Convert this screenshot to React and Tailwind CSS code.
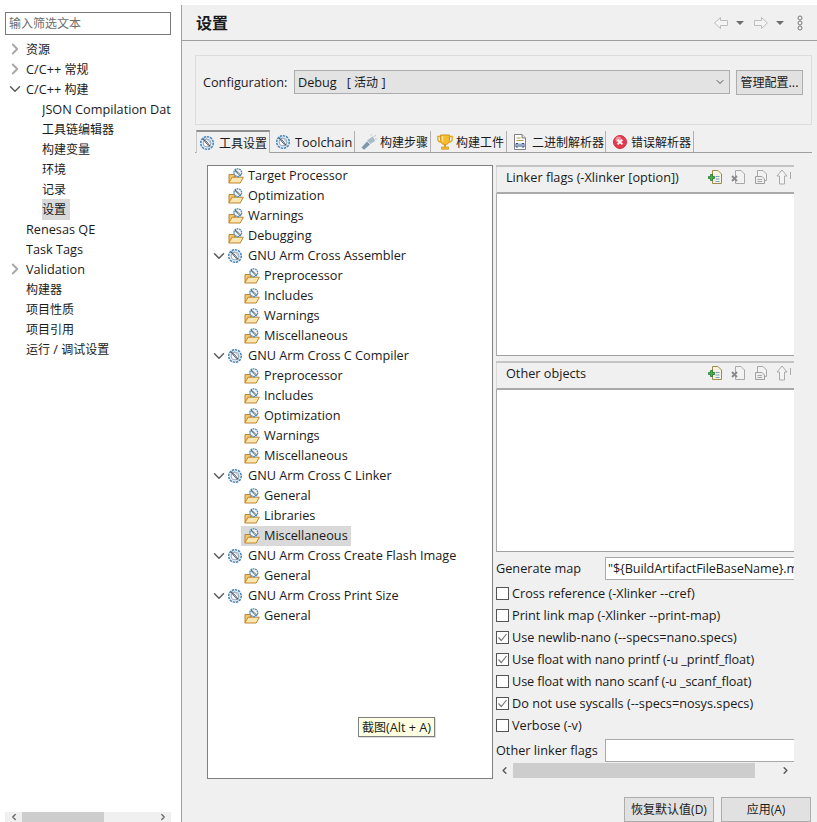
import { ChevronRight, ChevronDown, ChevronLeft } from 'lucide-react'

const FONT = 'font-["Open_Sans","Noto_Sans_CJK_SC",sans-serif]'

const navItems = [
  { label: '资源', arrow: 'right' },
  { label: 'C/C++ 常规', arrow: 'right' },
  { label: 'C/C++ 构建', arrow: 'down' },
  { label: 'JSON Compilation Dat', sub: true },
  { label: '工具链编辑器', sub: true },
  { label: '构建变量', sub: true },
  { label: '环境', sub: true },
  { label: '记录', sub: true },
  { label: '设置', sub: true, selected: true },
  { label: 'Renesas QE' },
  { label: 'Task Tags' },
  { label: 'Validation', arrow: 'right' },
  { label: '构建器' },
  { label: '项目性质' },
  { label: '项目引用' },
  { label: '运行 / 调试设置' },
]

const toolTree = [
  { label: 'Target Processor', depth: 0 },
  { label: 'Optimization', depth: 0 },
  { label: 'Warnings', depth: 0 },
  { label: 'Debugging', depth: 0 },
  { label: 'GNU Arm Cross Assembler', tool: true },
  { label: 'Preprocessor', depth: 1 },
  { label: 'Includes', depth: 1 },
  { label: 'Warnings', depth: 1 },
  { label: 'Miscellaneous', depth: 1 },
  { label: 'GNU Arm Cross C Compiler', tool: true },
  { label: 'Preprocessor', depth: 1 },
  { label: 'Includes', depth: 1 },
  { label: 'Optimization', depth: 1 },
  { label: 'Warnings', depth: 1 },
  { label: 'Miscellaneous', depth: 1 },
  { label: 'GNU Arm Cross C Linker', tool: true },
  { label: 'General', depth: 1 },
  { label: 'Libraries', depth: 1 },
  { label: 'Miscellaneous', depth: 1, selected: true },
  { label: 'GNU Arm Cross Create Flash Image', tool: true },
  { label: 'General', depth: 1 },
  { label: 'GNU Arm Cross Print Size', tool: true },
  { label: 'General', depth: 1 },
]

const linkerChecks = [
  { label: 'Cross reference (-Xlinker --cref)' },
  { label: 'Print link map (-Xlinker --print-map)' },
  { label: 'Use newlib-nano (--specs=nano.specs)', checked: true },
  { label: 'Use float with nano printf (-u _printf_float)', checked: true, tight: true },
  { label: 'Use float with nano scanf (-u _scanf_float)', tight: true },
  { label: 'Do not use syscalls (--specs=nosys.specs)', checked: true },
  { label: 'Verbose (-v)' },
]

// chinese runs sit at 12px in the screenshot, latin a bit bigger
function Txt({ children }) {
  return children.split(/([\u4e00-\u9fff]+)/).map((part, i) =>
    i % 2 ? <span key={i} className="text-[12px]">{part}</span> : part
  )
}

function GearIcon() {
  return (
    <svg width="16" height="16" viewBox="0 0 16 16" className="shrink-0 -ml-px mr-px">
      <circle cx="8" cy="8" r="6.3" fill="#e6eef5" stroke="#4a86b8" strokeWidth="1.5" strokeDasharray="2.4 0.8" />
      <circle cx="8" cy="8" r="3.9" fill="#fff" stroke="#7d93a8" strokeWidth="0.8" />
      <path d="M4.2 3.8 L11.2 11.6" stroke="#46525e" strokeWidth="2" strokeDasharray="1.2 0.5" />
      <path d="M7 3.2 L12.4 9" stroke="#9db4c8" strokeWidth="1" />
    </svg>
  )
}

function FolderIcon() {
  return (
    <svg width="16" height="16" viewBox="0 0 16 16" className="shrink-0">
      <path d="M1 14.5 V6.5 H6.5 V14.5 Z" fill="#f3c76c" stroke="#bb8430" />
      <path d="M0.7 15 L4.2 9.2 H15.4 L12.2 15 Z" fill="#fde6ad" stroke="#bb8430" />
      <circle cx="9.8" cy="4.7" r="3.9" fill="#eef3f8" stroke="#4a86b8" strokeWidth="1.3" strokeDasharray="1.8 0.6" />
      <path d="M7.2 2.4 L12.2 7.2" stroke="#46525e" strokeWidth="1.7" strokeDasharray="1 0.5" />
    </svg>
  )
}

function TabIcon({ kind }) {
  if (kind === 'gear') return <GearIcon />
  if (kind === 'hammer') {
    return (
      <svg width="16" height="16" viewBox="0 0 16 16" className="shrink-0">
        <path d="M0.5 13.5 L6 7.5 L9 10.5 L3 15.8 Z" fill="#7d98ab" />
        <path d="M6 6.5 L11.5 2.5 L13 4.5 L14 7 L9.5 10 Z" fill="#a7bccb" />
        <path d="M9.5 1.5 L11 0.5 M12.5 2.5 L15 1.5 M14 5 L16 5" stroke="#bccbd6" />
      </svg>
    )
  }
  if (kind === 'trophy') {
    return (
      <svg width="16" height="16" viewBox="0 0 16 16" className="shrink-0">
        <path d="M3.5 1 H12.5 V6.5 C12.5 9.5 10 10.5 8 10.5 C6 10.5 3.5 9.5 3.5 6.5 Z" fill="#f7bd2e" stroke="#d1951a" />
        <path d="M5.5 2 V7.5" stroke="#fde28c" strokeWidth="1.4" />
        <path d="M3.5 2.5 H0.8 V5 C0.8 7 2.5 8 4.2 8 M12.5 2.5 H15.2 V5 C15.2 7 13.5 8 11.8 8" fill="none" stroke="#e2a61f" strokeWidth="1.3" />
        <path d="M7 10.5 H9 V12.8 H7 Z" fill="#d1951a" />
        <path d="M4.5 13 H11.5 V15.2 H4.5 Z" fill="#f7bd2e" stroke="#d1951a" strokeWidth="0.8" />
      </svg>
    )
  }
  if (kind === 'binary') {
    return (
      <svg width="16" height="16" viewBox="0 0 16 16" className="shrink-0">
        <path d="M1.5 0.5 H9 L12.5 4 V15.5 H1.5 Z" fill="#fff" stroke="#7b7f86" />
        <path d="M9 0.5 V4 H12.5" fill="#e7e3c8" stroke="#7b7f86" />
        <path d="M3.5 4 H7.5 M3.5 6.5 H10.5" stroke="#b69a54" />
        <path d="M3 9.5 H5 V13 H3 Z M7 9.5 V13 M9 9.5 H11 V13 H9 Z" fill="none" stroke="#2f4f85" />
      </svg>
    )
  }
  return (
    <svg width="16" height="16" viewBox="0 0 16 16" className="shrink-0">
      <circle cx="8" cy="8" r="6.5" fill="#e23b4e" stroke="#cf3043" />
      <circle cx="6.5" cy="5.5" r="3" fill="#f08c98" />
      <path d="M5.6 5.6 L10.4 10.4 M10.4 5.6 L5.6 10.4" stroke="#fff" strokeWidth="1.8" />
    </svg>
  )
}

function PaneTools() {
  return (
    <div className="flex items-center gap-[7px] mr-[-6px]">
      <svg width="16" height="16" viewBox="0 0 16 16" className="shrink-0">
        <path d="M5.5 1.5 H11 L14.5 5 V14.5 H5.5 Z" fill="#f6f3e4" stroke="#9f8a4b" />
        <path d="M8.5 7.5 H12.5 M8.5 10 H12.5 M8.5 12.5 H12.5" stroke="#7ba0c7" />
        <path d="M3.5 5.5 H5.5 V7.5 H7.5 V9.5 H5.5 V11.5 H3.5 V9.5 H1.5 V7.5 H3.5 Z" fill="#4caf50" stroke="#1f7a2e" strokeWidth="0.8" />
      </svg>
      <svg width="16" height="16" viewBox="0 0 16 16" className="shrink-0">
        <path d="M5.5 1.5 H11 L14.5 5 V14.5 H5.5 Z" fill="#f2f2f2" stroke="#a8a8a8" />
        <path d="M2 7 L7 12 M7 7 L2 12" stroke="#8a8a8a" strokeWidth="1.9" />
      </svg>
      <svg width="16" height="16" viewBox="0 0 16 16" className="shrink-0">
        <path d="M4.5 1.5 H10 L13.5 5 V11.5 H4.5 Z" fill="#f2f2f2" stroke="#a8a8a8" />
        <path d="M2.5 7.5 H9 L11.5 10 V14.5 H2.5 Z" fill="#ededed" stroke="#a0a0a0" />
        <path d="M4.5 10.5 H9 M4.5 12.5 H9" stroke="#a8a8a8" />
      </svg>
      <svg width="16" height="16" viewBox="0 0 16 16" className="shrink-0">
        <path d="M6 1 L11 7 H8.5 V15 H3.5 V7 H1 Z" fill="#f4f4f4" stroke="#ababab" />
        <path d="M14.5 3 V10" stroke="#ababab" />
      </svg>
    </div>
  )
}

function ListPane({ title, className }) {
  return (
    <div className={`flex flex-col border-t-2 border-[#c4c4c4] ${className}`}>
      <div className="h-[27px] flex items-center justify-between pl-[9px] pr-[8px] pb-[5px] border-b-2 border-[#a9a9a9] border-l border-l-[#d8d8d8]">
        <span>{title}</span>
        <PaneTools />
      </div>
      <div className="flex-1 bg-white border-l border-l-[#a9a9a9] border-b border-b-[#a0a0a0]" />
    </div>
  )
}

function Arrow({ dir }) {
  if (dir === 'right') return <ChevronRight size={18} strokeWidth={2.4} className="text-[#a6a6a6] shrink-0" />
  if (dir === 'down') return <ChevronDown size={18} strokeWidth={2} className="text-[#5c5c5c] shrink-0" />
  return null
}

function Tab({ icon, label, active, className }) {
  return (
    <div className={`flex items-center gap-[3px] border-r border-[#b0b0b0] whitespace-nowrap ${className} ${active ? 'h-[23px] -mb-px pl-[3px] border-t-2 border-t-[#8f8f8f] border-l border-l-[#c8c8c8] bg-[#f0f0f0]' : 'h-[21px] pl-[6px]'}`}>
      <TabIcon kind={icon} />
      <span className="pt-px"><Txt>{label}</Txt></span>
    </div>
  )
}

export default function App() {
  return (
    <div className={`relative w-[817px] h-[822px] flex bg-white overflow-hidden text-[12.7px] leading-[20px] text-[#1a1a1a] ${FONT}`}>
      <aside className="w-[181px] shrink-0 flex flex-col pt-[12px]">
        <div className="mx-[5px] w-[166px] h-[23px] border border-[#7a7a7a] px-[3px] flex items-center text-[12px] text-[#6d6d6d] box-border">
          输入筛选文本
        </div>
        <div className="mt-[4px] flex-1 overflow-hidden">
          {navItems.map((it, i) => (
            <div key={i} className="h-[20px] flex items-center whitespace-nowrap">
              <span className="w-[26px] pl-[6px] shrink-0 flex">
                <Arrow dir={it.arrow} />
              </span>
              <span className={it.sub ? 'ml-[16px] w-[129px] overflow-hidden' : ''}>
                <span className={it.selected ? 'bg-[#d9d9d9] px-[4px] -ml-[4px] inline-block' : ''}><Txt>{it.label}</Txt></span>
              </span>
            </div>
          ))}
        </div>
        <div className="mx-[5px] w-[166px] h-[10px] bg-[#f0f0f0] flex items-center overflow-hidden">
          <span className="w-[17px] flex justify-center text-[#666]"><ChevronLeft size={10} strokeWidth={3} /></span>
          <div className="w-[82px] h-full bg-[#cdcdcd]" />
          <span className="ml-auto w-[17px] flex justify-center text-[#666]"><ChevronRight size={10} strokeWidth={3} /></span>
        </div>
      </aside>

      <main className="flex-1 min-w-0 mt-[5px] border-l border-[#a0a0a0] bg-[#f0f0f0] flex flex-col">
        <header className="h-[36px] shrink-0 border-b border-[#a0a0a0] flex items-center pl-[14px] pr-[14px]">
          <h1 className="text-[16px] font-bold">设置</h1>
          <div className="ml-auto flex items-center">
            <svg width="16" height="14" viewBox="0 0 16 14"><path d="M7.5 1.5 L1.5 7 L7.5 12.5 V9.5 H14.5 V4.5 H7.5 Z" fill="#f4f4f4" stroke="#bdbdbd" /></svg>
            <span className="ml-[7px] w-0 h-0 border-x-[4px] border-x-transparent border-t-[4px] border-t-[#6e6e6e]" />
            <svg width="16" height="14" viewBox="0 0 16 14" className="ml-[9px]"><path d="M8.5 1.5 L14.5 7 L8.5 12.5 V9.5 H1.5 V4.5 H8.5 Z" fill="#f4f4f4" stroke="#bdbdbd" /></svg>
            <span className="ml-[7px] w-0 h-0 border-x-[4px] border-x-transparent border-t-[4px] border-t-[#6e6e6e]" />
            <svg width="6" height="16" viewBox="0 0 6 16" className="ml-[13px]">
              <circle cx="3" cy="3" r="2" fill="none" stroke="#777" />
              <circle cx="3" cy="8" r="2" fill="none" stroke="#777" />
              <circle cx="3" cy="13" r="2" fill="none" stroke="#777" />
            </svg>
          </div>
        </header>

        <div className="flex-1 min-h-0 flex flex-col pl-[13px] pr-[5px]">
          <section className="mt-[14px] h-[70px] border border-[#dcdcdc] flex items-start pt-[14px] pl-[7px] shrink-0">
            <span className="w-[91px] h-[24px] flex items-center">Configuration:</span>
            <div className="w-[436px] h-[24px] border border-[#adadad] bg-[#e3e3e3] pl-[3px] pr-[3px] flex items-center justify-between">
              <span><Txt>{'Debug\u00a0\u00a0 [ 活动 ]'}</Txt></span>
              <ChevronDown size={12} className="text-[#555]" />
            </div>
            <button className="ml-[6px] w-[67px] h-[25px] border border-[#adadad] bg-[#e1e1e1]"><Txt>管理配置...</Txt></button>
          </section>

          <div className="mt-[6px] h-[22px] shrink-0 flex items-end border-b border-[#a0a0a0] pl-px">
            <Tab icon="gear" label="工具设置" active className="w-[74px]" />
            <Tab icon="gear" label="Toolchain" className="w-[85px]" />
            <Tab icon="hammer" label="构建步骤" className="w-[76px]" />
            <Tab icon="trophy" label="构建工件" className="w-[76px] gap-[2px]" />
            <Tab icon="binary" label="二进制解析器" className="w-[99px] gap-[2px]" />
            <Tab icon="error" label="错误解析器" className="w-[88px]" />
          </div>

          <div className="flex-1 min-h-0 flex pl-[12px] pt-[12px] overflow-hidden">
            <div className="w-[286px] h-[614px] shrink-0 bg-white border border-[#7f7f7f] overflow-hidden">
              {toolTree.map((n, i) => (
                <div key={i} className={`h-[20px] flex items-center whitespace-nowrap ${n.tool ? 'pl-[2px]' : n.depth ? 'pl-[33px]' : 'pl-[17px]'}`}>
                  {n.tool && (
                    <span className="w-[15px] flex shrink-0"><Arrow dir="down" /></span>
                  )}
                  <span className={`flex items-center h-[20px] gap-[4px] pl-[3px] pr-[3px] ${n.selected ? 'bg-[#d9d9d9]' : ''}`}>
                    {n.tool ? <GearIcon /> : <FolderIcon />}
                    <span className="pb-[2px]">{n.label}</span>
                  </span>
                </div>
              ))}
            </div>

            <div className="w-[298px] shrink-0 ml-[3px] flex flex-col overflow-hidden">
              <ListPane title="Linker flags (-Xlinker [option])" className="h-[191px]" />
              <ListPane title="Other objects" className="h-[191px] mt-[5px]" />
              <div className="mt-[5px] h-[23px] flex items-center">
                <span className="w-[109px] shrink-0 pb-[2px]">Generate map</span>
                <div className="flex-1 min-w-0 h-[23px] bg-white border border-r-0 border-[#a9a9a9] pl-[2px] overflow-hidden whitespace-nowrap tracking-[-0.12px]">
                  "{'${BuildArtifactFileBaseName}'}.map"
                </div>
              </div>
              <div className="mt-[2px] flex flex-col">
                {linkerChecks.map((c, i) => (
                  <label key={i} className={`h-[22px] flex items-center gap-[3px] whitespace-nowrap ${c.tight ? 'tracking-[-0.11px]' : ''}`}>
                    <span className="w-[13px] h-[13px] border border-[#555] bg-white shrink-0 flex items-center justify-center">
                      {c.checked && (
                        <svg width="11" height="11" viewBox="0 0 11 11"><path d="M1.5 5.5 L4.3 8.5 L9.5 2" fill="none" stroke="#777" strokeWidth="1.2" /></svg>
                      )}
                    </span>
                    {c.label}
                  </label>
                ))}
              </div>
              <div className="mt-[3px] h-[23px] flex items-center">
                <span className="w-[109px] shrink-0 pb-[2px]">Other linker flags</span>
                <div className="flex-1 h-[23px] bg-white border border-r-0 border-[#a9a9a9]" />
              </div>
              <div className="mt-[1px] h-[15px] flex items-center">
                <span className="w-[17px] flex justify-center text-[#555]"><ChevronLeft size={11} strokeWidth={3} /></span>
                <div className="w-[242px] h-full bg-[#cdcdcd]" />
                <span className="ml-[21px] w-[18px] flex justify-center text-[#555]"><ChevronRight size={11} strokeWidth={3} /></span>
              </div>
            </div>
          </div>

          <footer className="h-[25px] shrink-0 flex items-start justify-end pr-[1px]">
            <button className="w-[90px] h-[25px] border border-[#adadad] bg-[#e1e1e1] text-[12px]">恢复默认值(D)</button>
            <button className="ml-[7px] w-[90px] h-[25px] border border-[#adadad] bg-[#e1e1e1] text-[12px]">应用(A)</button>
          </footer>
        </div>
      </main>

      <div className="absolute left-[358px] top-[717px] w-[77px] h-[20px] pl-[3px] border border-[#7f7f7f] bg-[#ffffe1] leading-[18px] whitespace-nowrap shadow-[1px_1px_0_#ddd]">
        <Txt>截图(Alt + A)</Txt>
      </div>
    </div>
  )
}
